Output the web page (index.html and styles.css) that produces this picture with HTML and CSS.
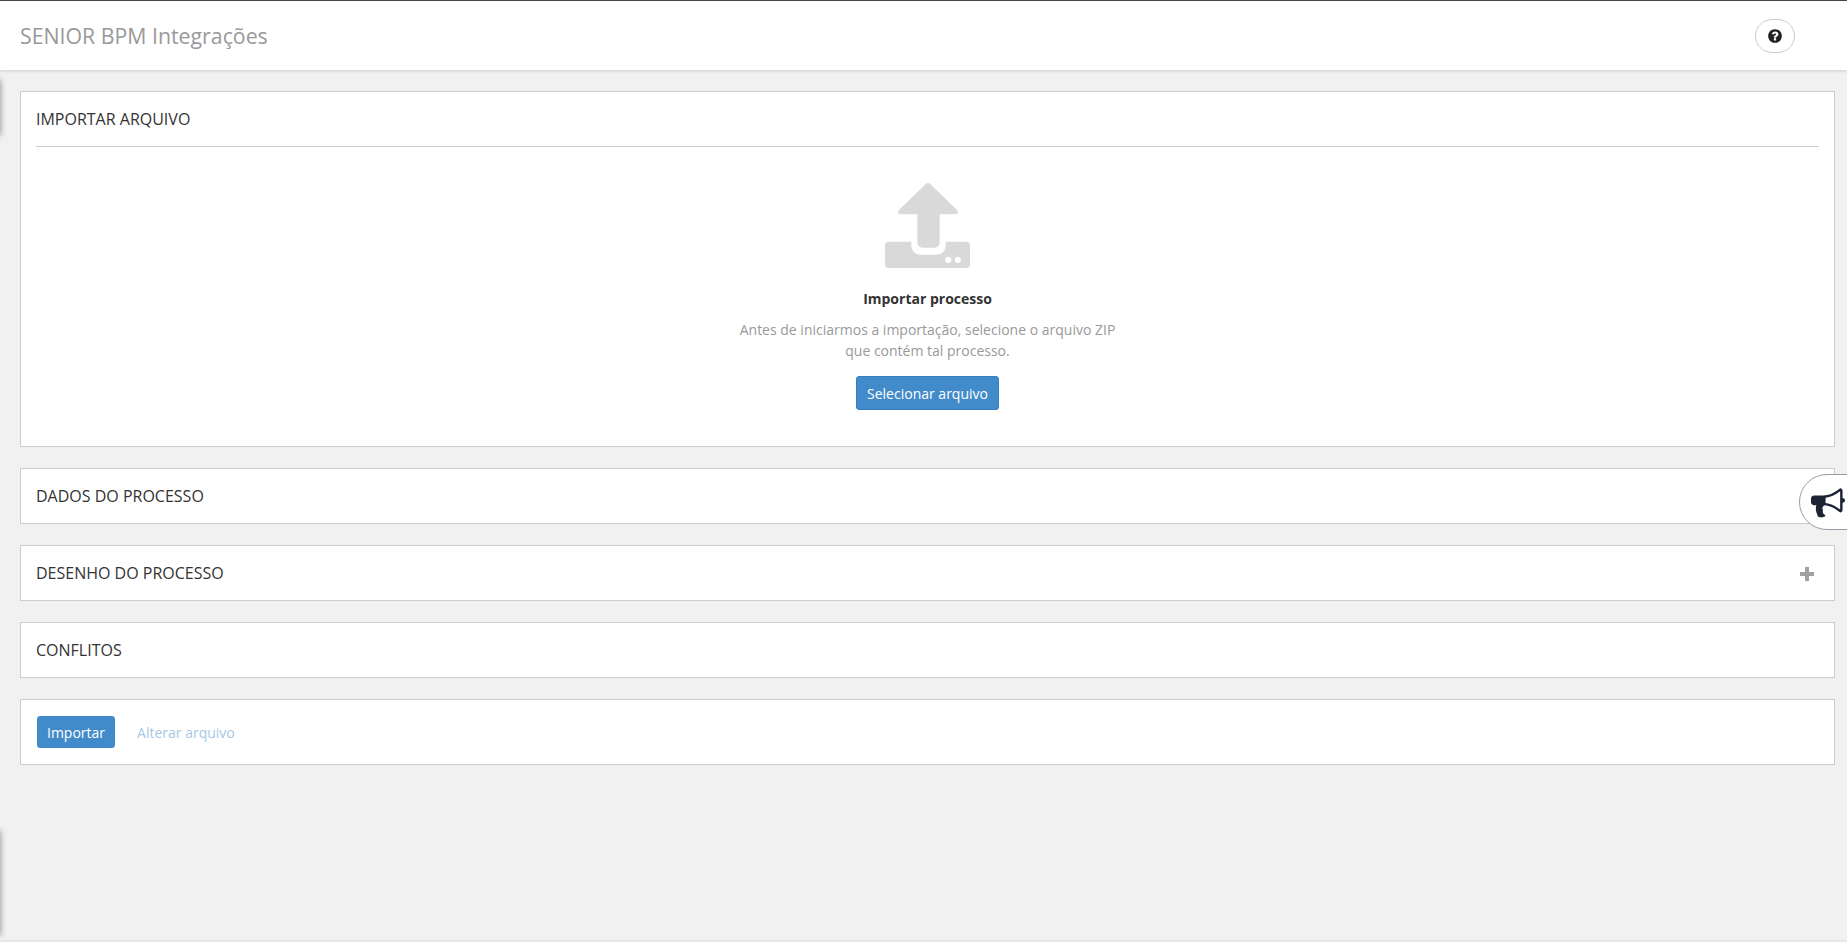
FILE: index.html
```html
<!DOCTYPE html>
<html lang="pt">
<head>
<meta charset="utf-8">
<title>SENIOR BPM Integrações</title>
<link rel="stylesheet" href="styles.css">
</head>
<body>
<header class="topbar">
  <h1 class="app-title">SENIOR BPM Integrações</h1>
  <button class="help-btn" type="button" aria-label="Ajuda">
    <svg class="help-icon" viewBox="0 0 1792 1792"><path d="M1024 1376v-192q0-14-9-23t-23-9h-192q-14 0-23 9t-9 23v192q0 14 9 23t23 9h192q14 0 23-9t9-23zm256-672q0-88-55.500-163t-138.500-116-170-41q-243 0-371 213-15 24 8 42l132 100q7 6 19 6 16 0 25-12 53-68 86-92 34-24 86-24 48 0 85.500 26t37.500 59q0 38-20 61t-68 45q-63 28-115.500 86.500t-52.500 125.500v36q0 14 9 23t23 9h192q14 0 23-9t9-23q0-19 21.500-49.500t54.500-49.500q32-18 49-28.500t46-35 44.500-48 28-60.500 12.500-81zm384 192q0 209-103 385.500t-279.500 279.500-385.500 103-385.500-103-279.500-279.500-103-385.500 103-385.500 279.500-279.500 385.500-103 385.500 103 279.500 279.500 103 385.500z"/></svg>
  </button>
</header>

<main class="content">
  <section class="panel">
    <h2 class="panel-title panel-title-ruled">IMPORTAR ARQUIVO</h2>
    <div class="dropzone">
      <svg class="upload-icon" viewBox="0 0 84 84">
        <path d="M40 1.200a3.500 3.500 0 0 1 5 0L71 26.500c2 2 1 4.500-2 4.500H54V59a5 5 0 0 1-5 5H37a5 5 0 0 1-5-5V31H16c-3 0-4-2.500-2-4.500z"/>
        <path fill-rule="evenodd" d="M4 58H26V62a9 9 0 0 0 9 9H51a9 9 0 0 0 9-9V58H80a4 4 0 0 1 4 4V80a4 4 0 0 1-4 4H4a4 4 0 0 1-4-4V62a4 4 0 0 1 4-4zM59.500 76a3 3 0 1 0 6 0a3 3 0 1 0-6 0zM69 76a3 3 0 1 0 6 0a3 3 0 1 0-6 0z"/>
      </svg>
      <h3 class="drop-title">Importar processo</h3>
      <p class="drop-text">Antes de iniciarmos a importação, selecione o arquivo ZIP<br>que contém tal processo.</p>
      <button class="btn" type="button">Selecionar arquivo</button>
    </div>
  </section>

  <section class="panel">
    <h2 class="panel-title">DADOS DO PROCESSO</h2>
  </section>

  <section class="panel panel-row">
    <h2 class="panel-title">DESENHO DO PROCESSO</h2>
    <svg class="plus-icon" viewBox="0 0 14 14"><path d="M5 0h4v5h5v4H9v5H5V9H0V5h5z"/></svg>
  </section>

  <section class="panel">
    <h2 class="panel-title">CONFLITOS</h2>
  </section>

  <section class="panel actions">
    <button class="btn" type="button">Importar</button>
    <a class="link-disabled" href="#">Alterar arquivo</a>
  </section>
</main>

<div class="edge-tab edge-tab-top"></div>
<div class="edge-tab edge-tab-bottom"></div>

<button class="feedback" type="button" aria-label="Novidades">
  <svg class="bullhorn" viewBox="0 0 1792 1792"><path d="M1664 736q53 0 90.500 37.500t37.500 90.500-37.500 90.500-90.500 37.500v384q0 52-38 90t-90 38q-417-347-812-380-58 19-91 66t-31 100.500 40 92.500q-20 33-23 65.500t6 58 33.500 55 48 50 61.500 50.500q-29 58-111.500 83t-168.500 11.500-132-55.500q-7-23-29.500-87.500t-32-94.500-23-89-15-101 3.500-98.500 22-110.500h-122q-66 0-113-47t-47-113v-192q0-66 47-113t113-47h480q435 0 896-384 52 0 90 38t38 90v384zm-128 604v-954q-394 302-768 343v270q377 42 768 341z"/></svg>
</button>
</body>
</html>
```

FILE: styles.css
```css
* { box-sizing: border-box; }

html, body { height: 100%; }

body {
  margin: 0;
  overflow: hidden;
  position: relative;
  background: #f1f1f1;
  color: #333;
  font-family: "Open Sans", sans-serif;
  font-size: 14px;
  border-bottom: 2px solid #e8e8e8;
}

.topbar {
  height: 70px;
  display: flex;
  align-items: center;
  justify-content: space-between;
  padding: 0 52px 0 20px;
  background: #fff;
  border-top: 1px solid #444;
  box-shadow: 0 1px 3px rgba(0, 0, 0, .15);
}

.app-title {
  margin: 0;
  font-size: 21.300px;
  font-weight: 400;
  color: #999;
}

.help-btn {
  width: 40px;
  height: 34px;
  padding: 0;
  display: flex;
  align-items: center;
  justify-content: center;
  background: #fff;
  border: 1px solid #ccc;
  border-radius: 17px;
}

.help-icon { width: 16px; height: 16px; fill: #222; }

.content {
  display: flex;
  flex-direction: column;
  gap: 21px;
  padding: 21px 12px 0 20px;
}

.panel {
  background: #fff;
  border: 1px solid #ccc;
  padding: 0 15px;
}

.panel-row {
  display: flex;
  align-items: center;
  justify-content: space-between;
  padding-right: 20px;
}

.panel-title {
  margin: 0;
  height: 54px;
  line-height: 54px;
  font-size: 16px;
  font-weight: 400;
  color: #333;
}

.panel-title-ruled {
  height: 55px;
  border-bottom: 1px solid #ccc;
}

.dropzone {
  display: flex;
  flex-direction: column;
  align-items: center;
  height: 299px;
  padding-top: 36px;
}

.upload-icon { width: 85px; height: 85px; fill: #d9d9d9; }

.drop-title {
  margin: 21px 0 0;
  font-size: 14px;
  line-height: 20px;
  font-weight: 700;
  color: #333;
}

.drop-text {
  margin: 10px 0 0;
  font-size: 14px;
  line-height: 21px;
  text-align: center;
  color: #999;
}

.btn {
  height: 34px;
  padding: 0 10px;
  margin-top: 15px;
  font-family: inherit;
  font-size: 14px;
  color: #fff;
  background: #428bca;
  border: 1px solid #357ebd;
  border-radius: 3px;
}

.plus-icon { width: 14px; height: 14px; margin-top: 1px; fill: #a0a0a0; }

.actions {
  display: flex;
  align-items: center;
  gap: 22px;
  height: 66px;
  padding: 0 16px;
}

.actions .btn {
  height: 32px;
  margin-top: 0;
  padding: 0 9px;
  border-color: #428bca;
}

.link-disabled {
  color: #a6c8e6;
  text-decoration: none;
}

.edge-tab {
  position: absolute;
  left: -8px;
  width: 8px;
  background: #ccc;
  box-shadow: 0 0 6px rgba(0, 0, 0, .45);
}

.edge-tab-top { top: 80px; height: 55px; }
.edge-tab-bottom { top: 831px; height: 104px; }

.feedback {
  position: absolute;
  top: 474px;
  right: -2px;
  width: 50px;
  height: 56px;
  padding: 0;
  background: #fff;
  border: 1px solid #9a9aa8;
  border-radius: 28px 0 0 28px;
}

.bullhorn {
  position: absolute;
  left: 11px;
  top: 9px;
  width: 34px;
  height: 34px;
  fill: #1c2333;
}
```
